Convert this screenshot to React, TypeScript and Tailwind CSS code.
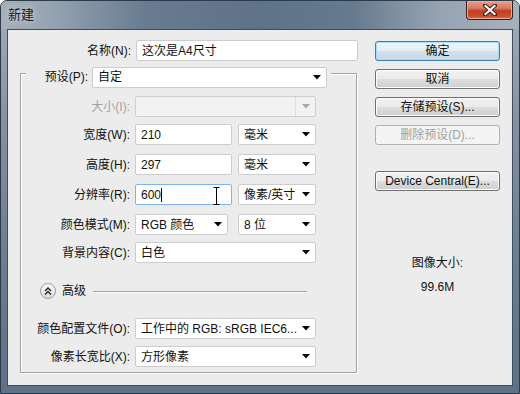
import React from "react";

const font = { fontFamily: '"Liberation Sans", "Noto Sans CJK SC", sans-serif' };

const Arrow: React.FC<{ disabled?: boolean }> = ({ disabled }) => (
  <svg width="8" height="5" viewBox="0 0 8 5" className="shrink-0">
    <path d="M0 0 L8 0 L4 4.5 Z" fill={disabled ? "#a8a8a8" : "#000"} />
  </svg>
);

const Select: React.FC<{ value?: string; w: string; disabled?: boolean }> = ({ value, w, disabled }) => (
  <div
    className={`${w} h-[21px] flex items-center justify-between pl-[5px] pr-[5px] border ${
      disabled ? "border-[#cfcfcf] bg-[#f2f2f2]" : "border-[#cdcdcd] bg-white"
    } rounded-[2px]`}
  >
    <span className="whitespace-nowrap">{value}</span>
    {disabled ? (
      <div className="flex items-center h-full">
        <div className="w-px h-full bg-[#dedede] mr-[6px]" />
        <Arrow disabled />
      </div>
    ) : (
      <Arrow />
    )}
  </div>
);

const Input: React.FC<{ value: string; w: string; focused?: boolean; children?: React.ReactNode }> = ({
  value,
  w,
  focused,
  children,
}) => (
  <div
    className={`${w} h-[21px] relative flex items-center pl-[5px] border rounded-[2px] bg-white ${
      focused ? "border-[#7eb4ea]" : "border-[#cdcdcd]"
    }`}
  >
    <span className="whitespace-nowrap">{value}</span>
    {focused && <span className="w-px h-[14px] bg-black" />}
    {children}
  </div>
);

const Row: React.FC<{ label: string; mt: string; disabled?: boolean; children: React.ReactNode }> = ({
  label,
  mt,
  disabled,
  children,
}) => (
  <div className={`flex items-center ${mt}`}>
    <div className={`w-[110px] text-right pr-px whitespace-nowrap ${disabled ? "text-[#a3a3a3]" : ""}`}>
      {label}
    </div>
    <div className="ml-[4px] flex items-center">{children}</div>
  </div>
);

const Button: React.FC<{ label: string; mt: string; primary?: boolean; disabled?: boolean }> = ({
  label,
  mt,
  primary,
  disabled,
}) => (
  <div
    className={`${mt} h-[20px] w-[125px] flex items-center justify-center rounded-[3px] border whitespace-nowrap ${
      primary
        ? "border-[#3c7fb1] bg-[linear-gradient(180deg,#eef6fb_0%,#e3eef6_50%,#d2e2ec_51%,#c7d9e6_100%)] shadow-[inset_0_0_0_1px_#a9dcf6]"
        : disabled
        ? "border-[#adb2b5] bg-[#f4f4f4] text-[#a0a0a0]"
        : "border-[#707070] bg-[linear-gradient(180deg,#f2f2f2_0%,#ebebeb_50%,#dddddd_51%,#cfcfcf_100%)] shadow-[inset_0_0_0_1px_#fcfcfc]"
    }`}
  >
    {label}
  </div>
);

const App: React.FC = () => {
  return (
    <div
      style={font}
      className="w-[520px] h-[394px] text-[12px] text-[#111] leading-none rounded-t-[7px] border border-[#2e3a47] overflow-hidden bg-[linear-gradient(180deg,#a3aeba_0%,#8492a2_30%,#6a7b8f_70%,#5f7186_100%)]"
    >
      {/* title bar */}
      <div className="h-[28px] flex items-start justify-between bg-[linear-gradient(90deg,#a6b0bb_0%,#95a2b0_10%,#687b90_28%,#5f7388_50%,#667a8f_68%,#95a2b0_84%,#a8b2bd_100%)]">
        <span className="pl-[7px] pt-[7px] text-[13px] text-[#1a1a1a] [text-shadow:0_0_6px_#e8edf2]">新建</span>
        <div className="mr-[6px] w-[47px] h-[19px] rounded-b-[4px] border border-t-0 border-[#3b1f1c] flex items-center justify-center bg-[linear-gradient(180deg,#e4a08f_0%,#d77a62_40%,#c23d22_55%,#c9502f_85%,#d97a55_100%)] shadow-[inset_0_0_0_1px_#eba998]">
          <svg width="14" height="12" viewBox="0 0 14 12">
            <path d="M2 1.5 L12 10.5 M12 1.5 L2 10.5" stroke="#3a1a14" strokeWidth="4" strokeLinecap="square" />
            <path d="M2.5 2 L11.5 10 M11.5 2 L2.5 10" stroke="#fff" strokeWidth="2.2" strokeLinecap="square" />
          </svg>
        </div>
      </div>

      {/* content */}
      <div className="mx-[6px] h-[357px] border border-[#404d5b] bg-[#ececec] flex">
        {/* left column */}
        <div className="w-[350px]">
          <div className="flex items-center mt-[10px]">
            <div className="w-[123px] text-right">名称(N):</div>
            <div className="ml-[5px]">
              <Input value="这次是A4尺寸" w="w-[222px]" />
            </div>
          </div>

          <div className="ml-[12px] mt-[12px] w-[337px] h-[300px] border border-[#a3a3a3] shadow-[inset_1px_1px_0_#fff,1px_1px_0_#fff]">
            {/* legend */}
            <div className="-mt-[7px] ml-[5px] w-[305px] h-[20px] flex items-center bg-[#ececec]">
              <div className="w-[62px] text-right">预设(P):</div>
              <div className="ml-[4px]">
                <Select value="自定" w="w-[235px]" />
              </div>
            </div>

            <Row label="大小(I):" mt="mt-[9px]" disabled>
              <Select w="w-[181px]" disabled />
            </Row>
            <Row label="宽度(W):" mt="mt-[7px]">
              <Input value="210" w="w-[97px]" />
              <div className="ml-[6px]">
                <Select value="毫米" w="w-[78px]" />
              </div>
            </Row>
            <Row label="高度(H):" mt="mt-[9px]">
              <Input value="297" w="w-[97px]" />
              <div className="ml-[6px]">
                <Select value="毫米" w="w-[78px]" />
              </div>
            </Row>
            <Row label="分辨率(R):" mt="mt-[9px]">
              <Input value="600" w="w-[97px]" focused>
                <svg width="7" height="18" viewBox="0 0 7 18" className="absolute left-[77px] top-[2px]">
                  <path d="M0.5 0.5 H6.5 M3.5 0.5 V17.5 M0.5 17.5 H6.5" stroke="#000" strokeWidth="1" fill="none" />
                </svg>
              </Input>
              <div className="ml-[6px]">
                <Select value="像素/英寸" w="w-[78px]" />
              </div>
            </Row>
            <Row label="颜色模式(M):" mt="mt-[9px]">
              <Select value="RGB 颜色" w="w-[93px]" />
              <div className="ml-[10px]">
                <Select value="8 位" w="w-[78px]" />
              </div>
            </Row>
            <Row label="背景内容(C):" mt="mt-[7px]">
              <Select value="白色" w="w-[181px]" />
            </Row>

            {/* advanced */}
            <div className="mt-[20px] h-[16px] flex items-center pl-[19px] pr-[49px]">
              <div className="w-[16px] h-[16px] rounded-full border border-[#9a9a9a] bg-[linear-gradient(180deg,#ffffff,#dcdcdc)] flex items-center justify-center">
                <svg width="8" height="8" viewBox="0 0 8 8">
                  <path d="M1 4 L4 1 L7 4 M1 7.5 L4 4.5 L7 7.5" stroke="#222" strokeWidth="1.4" fill="none" />
                </svg>
              </div>
              <span className="ml-[6px] whitespace-nowrap">高级</span>
              <div className="ml-[7px] flex-1 h-px bg-[#a3a3a3] shadow-[0_1px_0_#fff]" />
            </div>

            <Row label="颜色配置文件(O):" mt="mt-[19px]">
              <Select value="工作中的 RGB: sRGB IEC6..." w="w-[181px]" />
            </Row>
            <Row label="像素长宽比(X):" mt="mt-[7px]">
              <Select value="方形像素" w="w-[181px]" />
            </Row>
          </div>
        </div>

        {/* right column */}
        <div className="ml-[17px] flex flex-col">
          <Button label="确定" mt="mt-[11px]" primary />
          <Button label="取消" mt="mt-[8px]" />
          <Button label="存储预设(S)..." mt="mt-[8px]" />
          <Button label="删除预设(D)..." mt="mt-[8px]" disabled />
          <Button label="Device Central(E)..." mt="mt-[26px]" />
          <div className="mt-[64px] h-[16px] flex items-center justify-center">图像大小:</div>
          <div className="mt-[8px] h-[16px] flex items-center justify-center">99.6M</div>
        </div>
      </div>
    </div>
  );
};

export default App;
